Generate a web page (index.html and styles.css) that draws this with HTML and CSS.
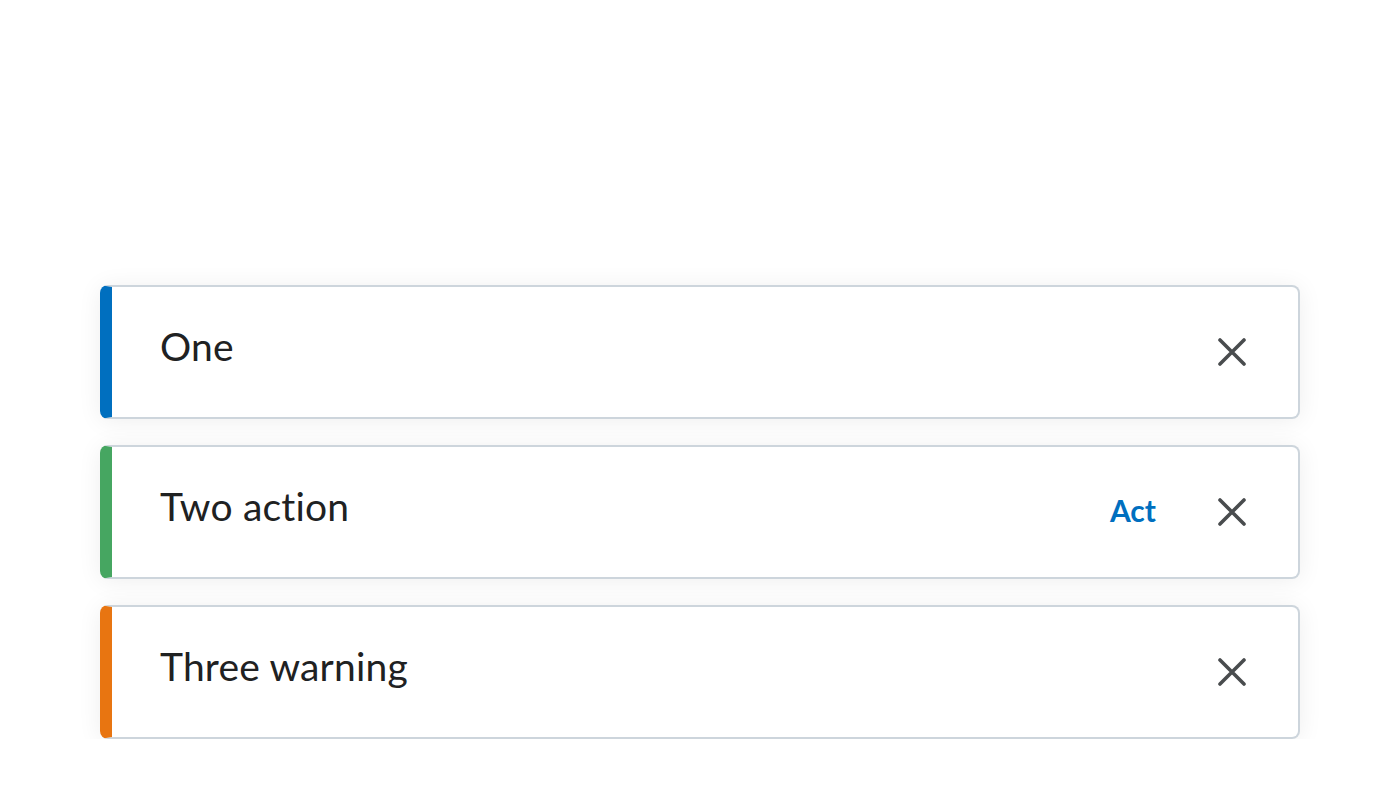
FILE: index.html
```html
<!DOCTYPE html>
<html>
<head>
<meta charset="utf-8">
<link rel="stylesheet" href="styles.css">
</head>
<body>
<div class="stack">
  <div class="alert alert-info">
    <div class="msg">One</div>
    <button class="close" aria-label="Close"><svg viewBox="0 0 28 28" width="28" height="28"><path d="M2 2 L26 26 M26 2 L2 26" stroke="#494c4e" stroke-width="3.6" stroke-linecap="round" fill="none"/></svg></button>
  </div>
  <div class="alert alert-success">
    <div class="msg">Two action</div>
    <button class="act">Act</button>
    <button class="close" aria-label="Close"><svg viewBox="0 0 28 28" width="28" height="28"><path d="M2 2 L26 26 M26 2 L2 26" stroke="#494c4e" stroke-width="3.6" stroke-linecap="round" fill="none"/></svg></button>
  </div>
  <div class="alert alert-warning">
    <div class="msg">Three warning</div>
    <button class="close" aria-label="Close"><svg viewBox="0 0 28 28" width="28" height="28"><path d="M2 2 L26 26 M26 2 L2 26" stroke="#494c4e" stroke-width="3.6" stroke-linecap="round" fill="none"/></svg></button>
  </div>
</div>
</body>
</html>
```
FILE: styles.css
```css
html, body {
  margin: 0;
  padding: 0;
  background: #ffffff;
  font-family: Lato, "Noto Sans", sans-serif;
}
.stack {
  display: flex;
  flex-direction: column;
  gap: 26px;
  width: 1200px;
  margin: 285px 0 0 100px;
}
.alert {
  box-sizing: border-box;
  height: 134px;
  display: flex;
  align-items: center;
  background: #fff;
  border: 2px solid #cdd5dc;
  border-left: 12px solid #006fbf;
  border-radius: 8px;
  box-shadow: 0 2px 24px rgba(0, 0, 0, 0.07);
  padding: 0 52px 0 48px;
}
.alert-success { border-left-color: #46a661; }
.alert-warning { border-left-color: #e87511; }
.msg {
  flex: 1;
  font-size: 39px;
  color: #202122;
  letter-spacing: 0.2px;
  margin-bottom: 13px;
}
.act {
  background: none;
  border: none;
  padding: 0;
  font-family: Lato, sans-serif;
  font-weight: 700;
  font-size: 30px;
  color: #006fbf;
  margin-right: 62px;
  margin-bottom: 4px;
  cursor: pointer;
}
.close {
  background: none;
  border: none;
  padding: 0;
  width: 28px;
  height: 28px;
  display: flex;
  cursor: pointer;
}
```
